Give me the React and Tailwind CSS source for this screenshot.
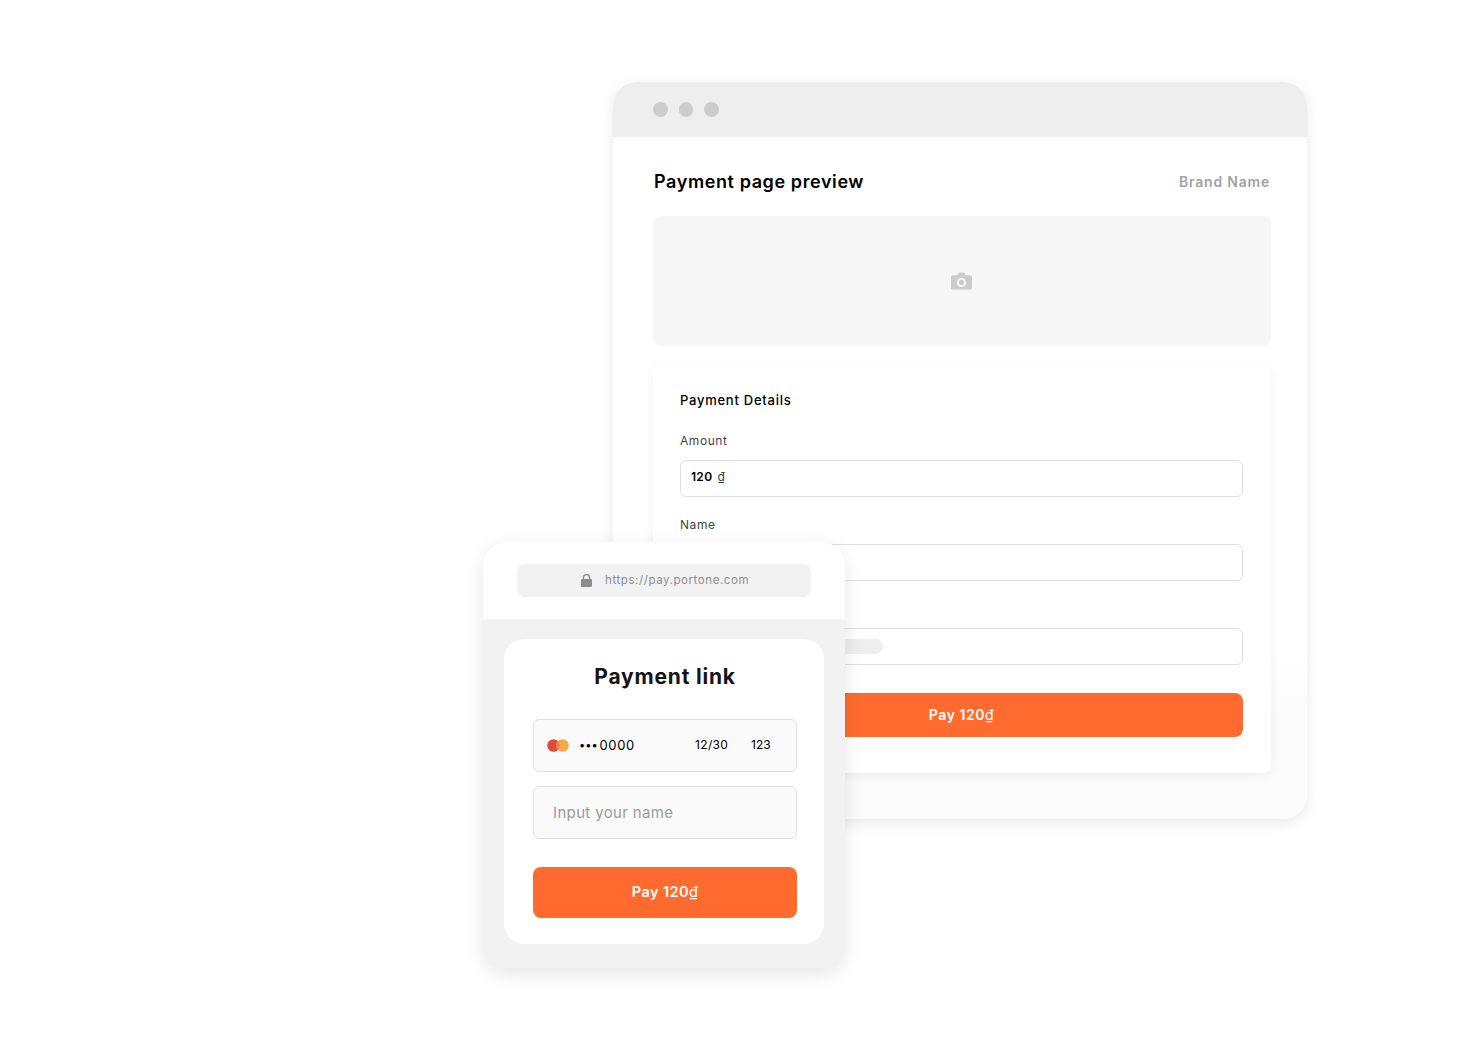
import React from 'react';

const font = { fontFamily: 'Inter, "Noto Sans", sans-serif' };

function Field({ label, children }) {
  return (
    <div className="mb-[20.5px]">
      <p className="text-[12px] leading-[16px] h-[16px] mb-[11px] text-[#444] tracking-[0.55px]">{label}</p>
      <div className="h-[36.5px] rounded-[6px] border border-[#e0e0e0] bg-white flex items-center px-[10px] pb-[2px]">
        {children}
      </div>
    </div>
  );
}

function BrowserWindow() {
  return (
    <div className="w-[694px] h-[737px] rounded-[24px] overflow-hidden bg-gradient-to-b from-white from-[78%] to-[#fbfbfb] to-[85%] shadow-[0_4px_16px_rgba(0,0,0,0.09)]">
      <div className="h-[55px] bg-[#eeeeee] flex items-center gap-[11px] pl-[40px]">
        <span className="w-[14.5px] h-[14.5px] rounded-full bg-[#cccccc]" />
        <span className="w-[14.5px] h-[14.5px] rounded-full bg-[#cccccc]" />
        <span className="w-[14.5px] h-[14.5px] rounded-full bg-[#cccccc]" />
      </div>
      <div className="pl-[40px] pr-[36px]">
        <div className="flex justify-between items-center h-[24px] mt-[32px] pr-[1px]">
          <h1 className="text-[18px] font-semibold text-black tracking-[0.6px] ml-[1px]">Payment page preview</h1>
          <span className="text-[14px] font-semibold text-[#a3a3a3] tracking-[0.8px]">Brand Name</span>
        </div>
        <div className="mt-[23px] h-[130px] rounded-[8px] bg-[#f7f7f7] flex items-center justify-center pr-[2px]">
          <svg width="21" height="18" viewBox="0 0 22 18" fill="none">
            <path d="M2 3h4.500l1.200-2.200C7.900.4 8.300.2 8.800.2h4.400c.5 0 .9.2 1.100.6L15.500 3H20c1.100 0 2 .9 2 2v11c0 1.100-.9 2-2 2H2c-1.100 0-2-.9-2-2V5c0-1.100.9-2 2-2z" fill="#cbcbcb" />
            <circle cx="11" cy="10.500" r="4.800" fill="#f7f7f7" />
            <circle cx="11" cy="10.500" r="2.700" fill="#cbcbcb" />
          </svg>
        </div>
        <div className="mt-[19px] h-[408px] rounded-[8px] bg-white shadow-[0_2px_12px_rgba(0,0,0,0.06)] pl-[27px] pr-[28px] pt-[26px]">
          <h2 className="text-[13px] leading-[18px] font-medium text-black mb-[24px] tracking-[0.75px]">Payment Details</h2>
          <Field label="Amount">
            <span className="text-[12px] font-semibold text-black tracking-[0.3px]">120</span>
            <span className="text-[12px] text-[#333] ml-[5px]">₫</span>
          </Field>
          <Field label="Name" />
          <Field label="">
            <span className="w-[192px] h-[15px] rounded-full bg-[#eeeeee] mt-[2px]" />
          </Field>
          <button className="mt-[8px] w-full h-[44px] rounded-[8px] bg-[#ff6b2e] text-white text-[14px] font-semibold tracking-[0.55px] pb-[2px]">
            Pay 120<span className="font-normal">₫</span>
          </button>
        </div>
      </div>
    </div>
  );
}

function PhoneCard() {
  return (
    <div className="absolute left-[483px] top-[542px] w-[362px] h-[426px] rounded-[24px] overflow-hidden bg-[#f2f2f2] shadow-[0_6px_20px_rgba(0,0,0,0.1)]">
      <div className="h-[77px] bg-white px-[34px] pt-[22px]">
        <div className="h-[33px] rounded-[8px] bg-[#f2f2f2] flex items-center pl-[64px] gap-[13px]">
          <svg width="11" height="13" viewBox="0 0 11 13" fill="none">
            <path d="M2.500 5V3.500a3 3 0 0 1 6 0V5" stroke="#8c8c8c" strokeWidth="1.400" />
            <rect x="0" y="5" width="11" height="8" rx="1.200" fill="#8c8c8c" />
          </svg>
          <span className="text-[11.5px] text-[#8f8f8f] tracking-[0.58px]">https://pay.portone.com</span>
        </div>
      </div>
      <div className="mx-[21px] mt-[20px] h-[305px] rounded-[20px] bg-white pl-[29px] pr-[27px] pt-[22px]">
        <h2 className="text-[21px] leading-[32px] font-bold text-[#141414] text-center tracking-[0.8px]">Payment link</h2>
        <div className="mt-[26px] h-[53px] rounded-[6px] border border-[#e0e0e0] bg-[#fafafa] flex items-center pl-[13px]">
          <svg width="22" height="13" viewBox="0 0 22 13">
            <circle cx="6.500" cy="6.500" r="6.300" fill="#df4a3f" />
            <circle cx="15.500" cy="6.500" r="6.300" fill="#f5a94a" />
            <path d="M11 2a6.300 6.300 0 0 1 0 9a6.300 6.300 0 0 1 0-9z" fill="#ea8a45" />
          </svg>
          <span className="ml-[10px] flex items-center gap-[2px] w-[116px]">
            <span className="text-[11px] leading-none text-black">•••</span>
            <span className="text-[13px] text-black tracking-[0.6px]">0000</span>
          </span>
          <span className="text-[12px] text-black w-[56px] tracking-[0.35px] pb-[2px]">12/30</span>
          <span className="text-[12px] text-black pb-[2px]">123</span>
        </div>
        <div className="mt-[14px] h-[53px] rounded-[6px] border border-[#e0e0e0] bg-[#fafafa] flex items-center pl-[19px]">
          <span className="text-[15px] text-[#9a9a9a] tracking-[0.35px] pt-[2px]">Input your name</span>
        </div>
        <button className="mt-[28px] w-full h-[51px] rounded-[8px] bg-[#ff6b2e] text-white text-[14.5px] font-semibold tracking-[0.4px] pb-[2px]">
          Pay 120<span className="font-normal">₫</span>
        </button>
      </div>
    </div>
  );
}

export default function App() {
  return (
    <div className="relative w-full h-[1050px] bg-white overflow-hidden pl-[613px] pt-[82px]" style={font}>
      <BrowserWindow />
      <PhoneCard />
    </div>
  );
}
